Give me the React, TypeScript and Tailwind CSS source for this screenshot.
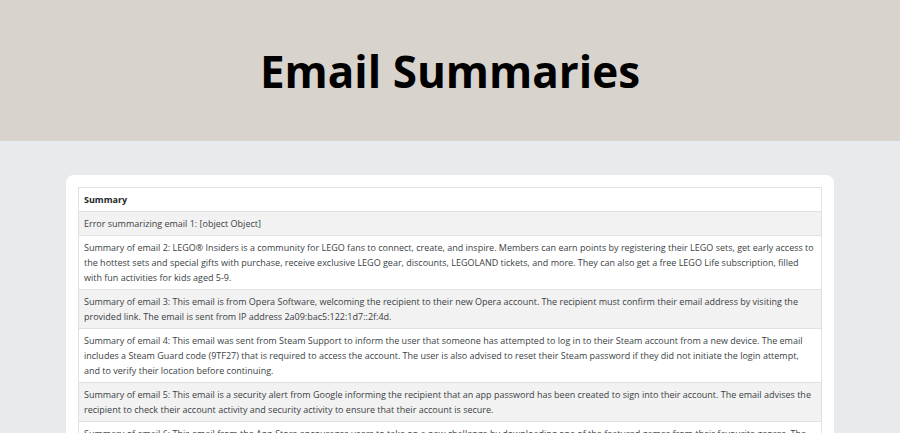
const SUMMARIES = [
  "Error summarizing email 1: [object Object]",
  "Summary of email 2: LEGO® Insiders is a community for LEGO fans to connect, create, and inspire. Members can earn points by registering their LEGO sets, get early access to the hottest sets and special gifts with purchase, receive exclusive LEGO gear, discounts, LEGOLAND tickets, and more. They can also get a free LEGO Life subscription, filled with fun activities for kids aged 5-9.",
  "Summary of email 3: This email is from Opera Software, welcoming the recipient to their new Opera account. The recipient must confirm their email address by visiting the provided link. The email is sent from IP address 2a09:bac5:122:1d7::2f:4d.",
  "Summary of email 4: This email was sent from Steam Support to inform the user that someone has attempted to log in to their Steam account from a new device. The email includes a Steam Guard code (9TF27) that is required to access the account. The user is also advised to reset their Steam password if they did not initiate the login attempt, and to verify their location before continuing.",
  "Summary of email 5: This email is a security alert from Google informing the recipient that an app password has been created to sign into their account. The email advises the recipient to check their account activity and security activity to ensure that their account is secure.",
  "Summary of email 6: This email from the App Store encourages users to take on a new challenge by downloading one of the featured games from their favourite genres. The games include puzzle, strategy and racing titles that can be played with friends.",
];

export default function App() {
  return (
    <div className="min-h-screen bg-[#e8ebee] text-[#212529] font-['Open_Sans',sans-serif]">
      <header className="flex h-[141px] items-center justify-center bg-[#d8d3cd]">
        <h1 className="text-[44px] font-bold leading-none text-black">Email Summaries</h1>
      </header>

      <main className="px-[66px] pt-[34px] pb-8">
        <div className="rounded-lg bg-white p-3">
          <table className="w-full border-collapse text-[9px] leading-[15px]">
            <thead>
              <tr>
                <th className="border border-[#dee2e6] px-[5px] py-1 text-left font-bold text-[#212529]">
                  Summary
                </th>
              </tr>
            </thead>
            <tbody>
              {SUMMARIES.map((s, i) => (
                <tr key={i} className={i % 2 === 0 ? "bg-[#f2f2f2]" : "bg-white"}>
                  <td className="border border-[#dee2e6] px-[5px] py-1 text-[#3a3f44]">{s}</td>
                </tr>
              ))}
            </tbody>
          </table>
        </div>
      </main>
    </div>
  );
}
